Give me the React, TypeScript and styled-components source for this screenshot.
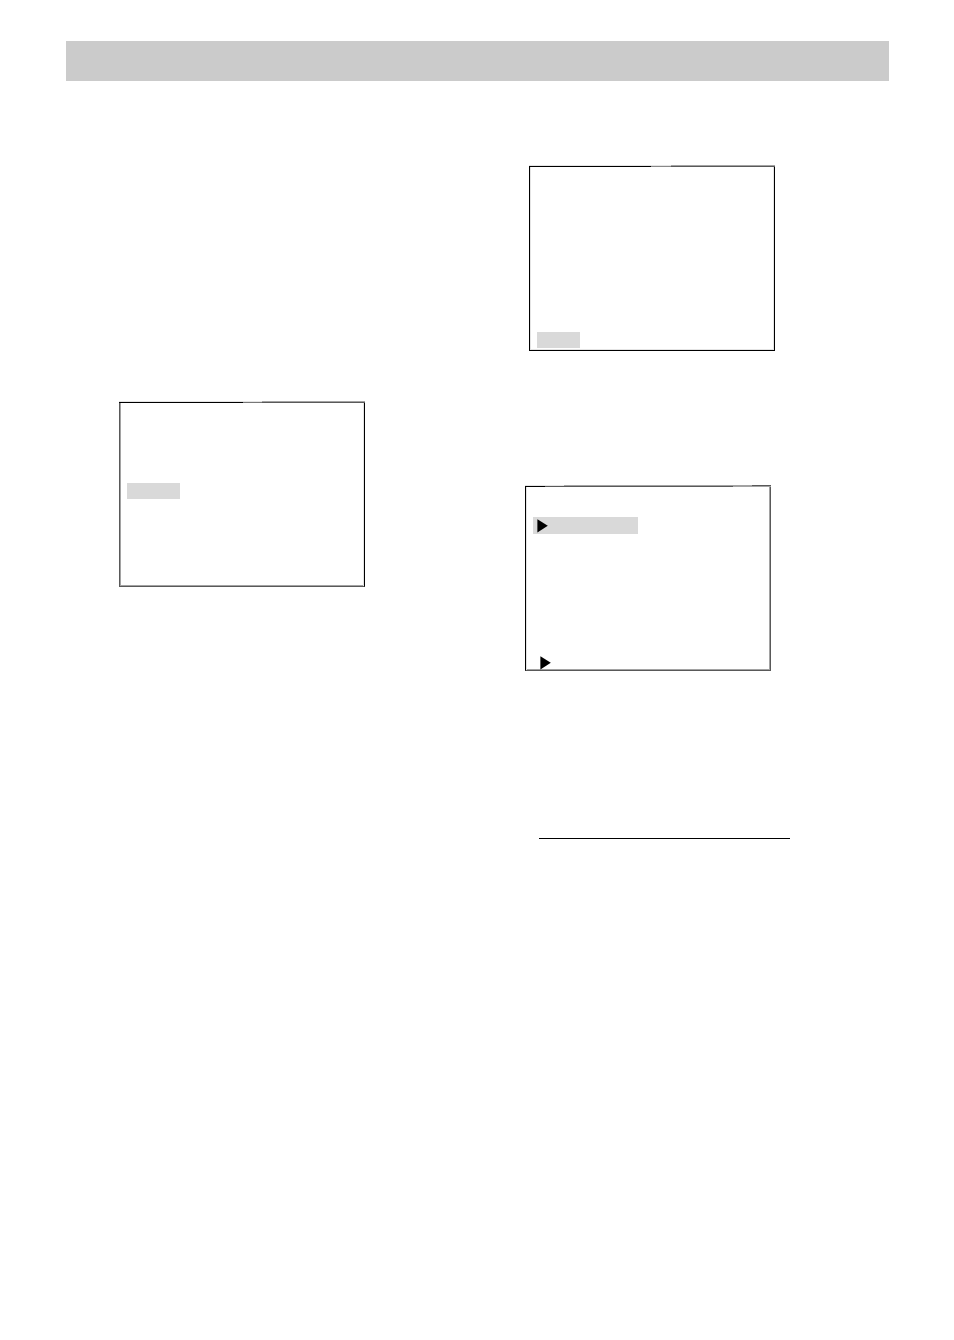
import React from "react";
import styled, { createGlobalStyle } from "styled-components";

const GlobalStyle = createGlobalStyle`
  *, *::before, *::after { box-sizing: border-box; }
  body { margin: 0; background: #fff; font-family: "Liberation Sans", Arial, sans-serif; }
`;

const Page = styled.main`
  min-height: 100vh;
  padding: 41px 65px 41px 66px;
  background: #fff;
`;

const TitleBar = styled.header`
  height: 40px;
  background: #cbcbcb;
`;

const Columns = styled.div`
  display: grid;
  grid-template-columns: 1fr 1fr;
  column-gap: 1px;
`;

const Column = styled.section<{ $top: number }>`
  display: flex;
  flex-direction: column;
  align-items: flex-start;
  padding-top: ${(p) => p.$top}px;
`;

const Panel = styled.div<{ $indent: number; $after?: number }>`
  display: flex;
  flex-direction: column;
  width: 246px;
  margin-left: ${(p) => p.$indent}px;
  margin-bottom: ${(p) => p.$after ?? 0}px;
`;

const TopEdge = styled.div`
  display: flex;
  height: 2px;
`;

const EdgePart = styled.span<{ $width?: number; $upper: string; $lower: string }>`
  flex: ${(p) => (p.$width ? `0 0 ${p.$width}px` : "1")};
  border-top: 1px solid ${(p) => p.$upper};
  border-bottom: 1px solid ${(p) => p.$lower};
`;

type Edge = "hard" | "soft";
const outer = { hard: "#000", soft: "#595959" };
const inner = { hard: "#e4e4e4", soft: "#a2a2a2" };

const Screen = styled.div<{ $left: Edge; $right: Edge; $bottom: Edge; $pad: number }>`
  display: flex;
  flex-direction: column;
  align-items: flex-start;
  height: 184px;
  padding: ${(p) => p.$pad}px 7px 0;
  border-style: solid;
  border-width: 0 1px 1px;
  border-color: transparent ${(p) => outer[p.$right]} ${(p) => outer[p.$bottom]} ${(p) => outer[p.$left]};
  box-shadow:
    inset 1px 0 ${(p) => inner[p.$left]},
    inset -1px 0 ${(p) => inner[p.$right]},
    inset 0 -1px ${(p) => inner[p.$bottom]};
`;

const Highlight = styled.div<{ $width: number; $height?: number }>`
  display: flex;
  align-items: flex-start;
  width: ${(p) => p.$width}px;
  height: ${(p) => p.$height ?? 16}px;
  padding: 2px 4px;
  background: #d9d9d9;
`;

const LastRow = styled.div`
  display: flex;
  margin-top: auto;
  padding-left: 7px;
`;

const Rule = styled.hr`
  width: 251px;
  height: 1px;
  margin: 0 0 0 61px;
  border: 0;
  background: #000;
`;

const Marker = () => (
  <svg width="11" height="14" viewBox="0 0 11 14" aria-hidden="true">
    <path d="M0.4 0.2 L10.8 6.8 L0.4 13.6 Z" fill="#000" />
  </svg>
);

export default function App() {
  return (
    <>
      <GlobalStyle />
      <Page>
        <TitleBar />
        <Columns>
          <Column $top={320}>
            <Panel $indent={53}>
              <TopEdge>
                <EdgePart $width={124} $upper="#e4e4e4" $lower="#000" />
                <EdgePart $width={19} $upper="#e4e4e4" $lower="#777" />
                <EdgePart $upper="#a2a2a2" $lower="#595959" />
              </TopEdge>
              <Screen $left="soft" $right="hard" $bottom="soft" $pad={80}>
                <Highlight $width={53} />
              </Screen>
            </Panel>
          </Column>
          <Column $top={84}>
            <Panel $indent={51} $after={134}>
              <TopEdge>
                <EdgePart $width={122} $upper="#e4e4e4" $lower="#000" />
                <EdgePart $width={20} $upper="#e4e4e4" $lower="#888" />
                <EdgePart $upper="#a2a2a2" $lower="#595959" />
              </TopEdge>
              <Screen $left="hard" $right="hard" $bottom="hard" $pad={165}>
                <Highlight $width={43} />
              </Screen>
            </Panel>
            <Panel $indent={47} $after={167}>
              <TopEdge>
                <EdgePart $width={20} $upper="#e4e4e4" $lower="#000" />
                <EdgePart $width={19} $upper="#e4e4e4" $lower="#595959" />
                <EdgePart $upper="#a2a2a2" $lower="#595959" />
                <EdgePart $width={19} $upper="#a2a2a2" $lower="#a2a2a2" />
                <EdgePart $width={19} $upper="#595959" $lower="#a2a2a2" />
              </TopEdge>
              <Screen $left="hard" $right="soft" $bottom="soft" $pad={30}>
                <Highlight $width={105} $height={17}>
                  <Marker />
                </Highlight>
                <LastRow>
                  <Marker />
                </LastRow>
              </Screen>
            </Panel>
            <Rule />
          </Column>
        </Columns>
      </Page>
    </>
  );
}
